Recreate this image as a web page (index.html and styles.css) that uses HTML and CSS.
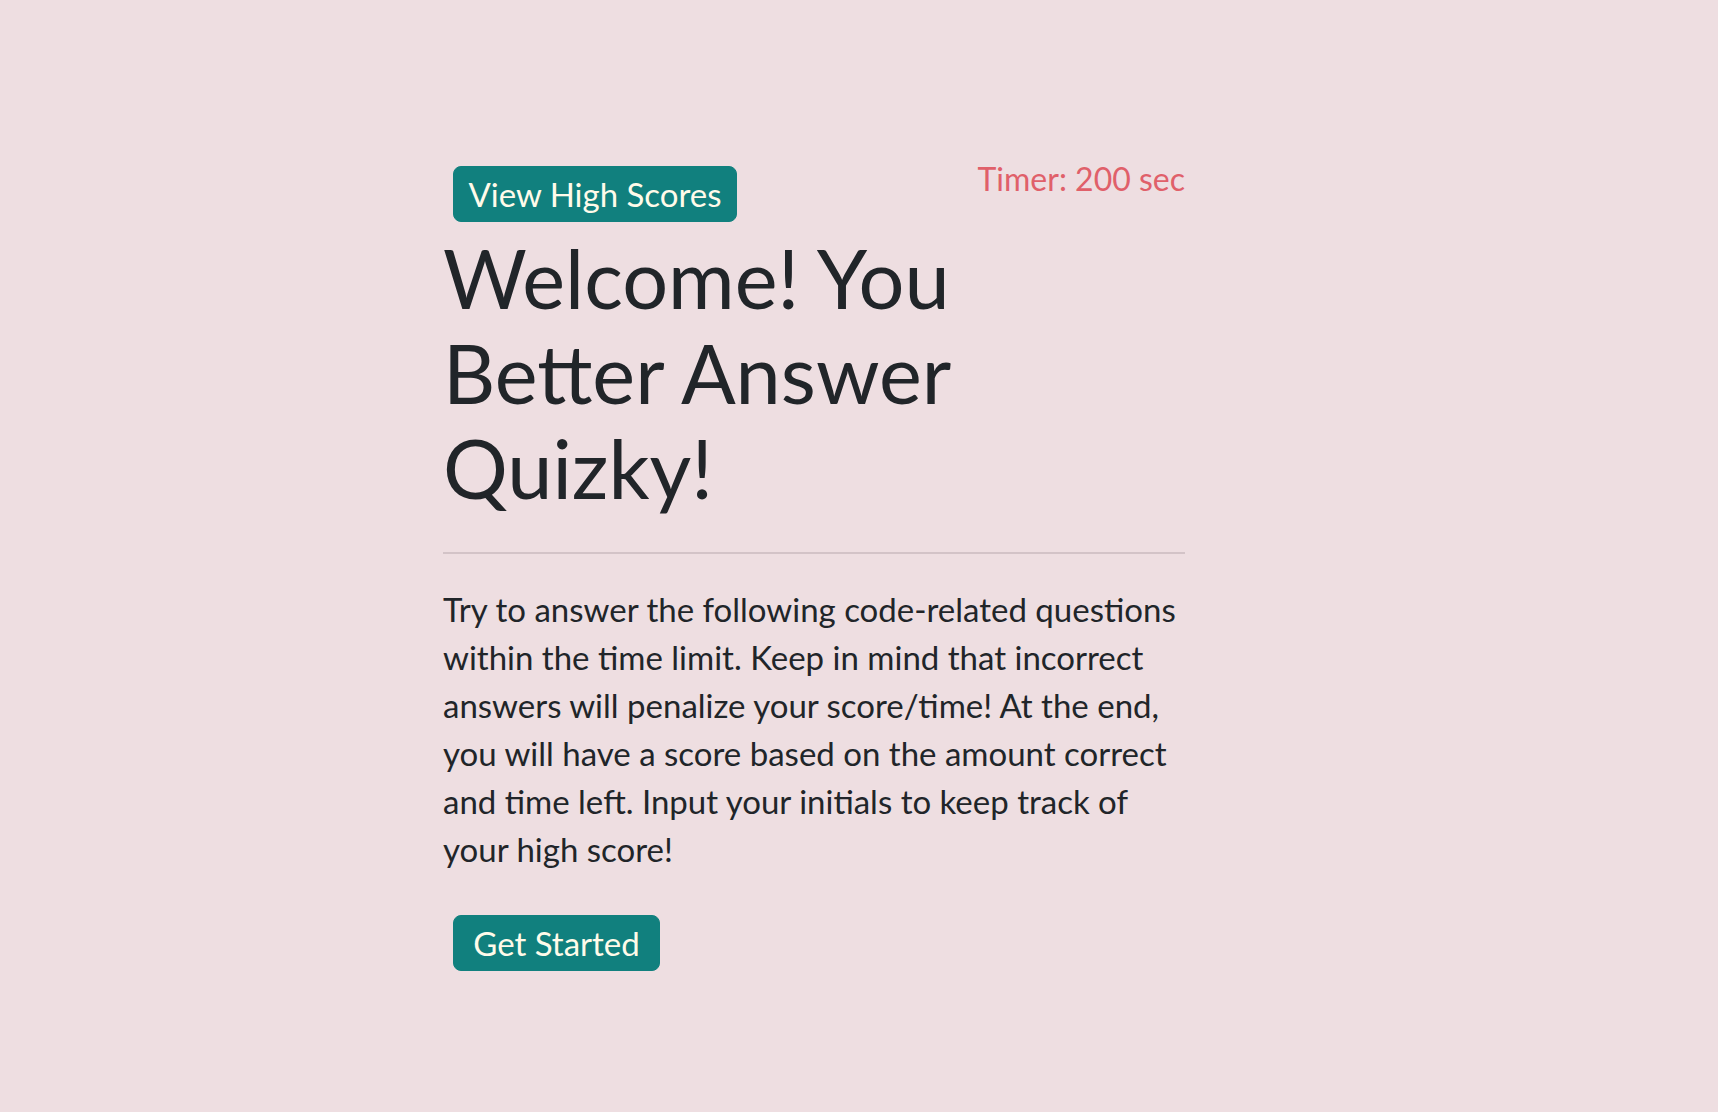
FILE: index.html
```html
<!DOCTYPE html>
<html lang="en">
<head>
<meta charset="utf-8">
<title>Quizky</title>
<link rel="stylesheet" href="styles.css">
</head>
<body>
<main class="quiz">
  <header class="topbar">
    <button class="btn btn-scores" type="button">View High Scores</button>
    <span class="timer">Timer: 200 sec</span>
  </header>
  <h1 class="title">Welcome! You Better Answer Quizky!</h1>
  <hr class="divider">
  <p class="intro">Try to answer the following code-related questions within the time limit. Keep in mind that incorrect answers will penalize your score/time! At the end, you will have a score based on the amount correct and time left. Input your initials to keep track of your high score!</p>
  <button class="btn btn-start" type="button">Get Started</button>
</main>
</body>
</html>
```
FILE: styles.css
```css
html, body {
  margin: 0;
  padding: 0;
}
body {
  background: #eedee1;
  color: #212529;
  font-family: "Lato", "Noto Sans", sans-serif;
  min-height: 1112px;
}
.quiz {
  width: 742px;
  margin-left: 443px;
  padding-top: 150px;
}
.topbar {
  display: flex;
  justify-content: space-between;
  align-items: flex-start;
}
.btn {
  box-sizing: border-box;
  font-family: inherit;
  font-size: 33px;
  line-height: 38px;
  padding: 8px 0;
  border: 1px solid #11807e;
  border-radius: 8px;
  background: #11807e;
  color: #fffbea;
  text-align: center;
  white-space: nowrap;
  cursor: pointer;
}
.btn-scores {
  margin: 16px 0 0 10px;
  width: 284px;
}
.timer {
  margin-top: 5px;
  font-size: 32px;
  line-height: 48px;
  color: #e0606a;
}
.title {
  margin: 8px 0 0 0;
  width: 560px;
  font-size: 81px;
  line-height: 95px;
  font-weight: 400;
}
.divider {
  margin: 37px 0 0 0;
  border: 0;
  border-top: 2px solid #d3c3c7;
}
.intro {
  margin: 31px 0 0 0;
  font-size: 33px;
  line-height: 48px;
}
.btn-start {
  margin: 42px 0 0 10px;
  width: 207px;
}
```
